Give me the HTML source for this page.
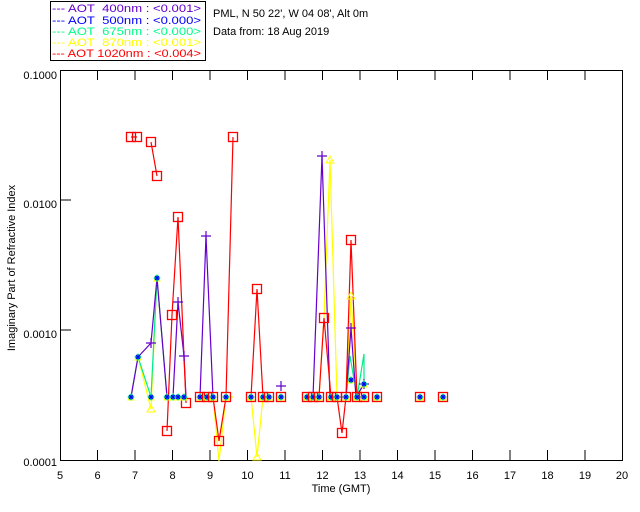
<!DOCTYPE html><html><head><style>body{margin:0;background:#fff}svg{display:block}text{font-family:"Liberation Sans",sans-serif;font-size:11px}</style></head><body>
<svg width="640" height="512" xmlns="http://www.w3.org/2000/svg">
<defs>
<g id="n"><path d="M-3 3L0-3 3 3Z" fill="none" stroke="#ff0"/><path d="M0-3L3 0 0 3-3 0Z" fill="none" stroke="#0f8"/><path d="M-2.5 0H2.5M0-2.5V2.5M-2-2L2 2M-2 2L2-2" fill="none" stroke="#00f" stroke-width="1"/></g>
<g id="b"><rect x="-4.5" y="-4.5" width="9" height="9" fill="none" stroke="#f00" stroke-width="1.3"/><use href="#n"/></g>
<rect id="r" x="-4.5" y="-4.5" width="9" height="9" fill="none" stroke="#f00" stroke-width="1.3"/>
<path id="p" d="M-5 0H5M0-5V5" fill="none" stroke="#60c" stroke-width="1.2"/>
<path id="t" d="M-4 3L0-4 4 3Z" fill="none" stroke="#ff0"/>
</defs>
<rect x="50.5" y="1.5" width="155" height="59" fill="none" stroke="#000"/>
<g font-size="11">
<text x="52" y="12" fill="#60c" textLength="149" lengthAdjust="spacingAndGlyphs">--- AOT&#160;&#160;400nm : &lt;0.001&gt;</text>
<text x="52" y="24" fill="#00f" textLength="149" lengthAdjust="spacingAndGlyphs">--- AOT&#160;&#160;500nm : &lt;0.000&gt;</text>
<text x="52" y="35" fill="#0f8" textLength="149" lengthAdjust="spacingAndGlyphs">--- AOT&#160;&#160;675nm : &lt;0.000&gt;</text>
<text x="52" y="46" fill="#ff0" textLength="149" lengthAdjust="spacingAndGlyphs">--- AOT&#160;&#160;870nm : &lt;0.001&gt;</text>
<text x="52" y="57" fill="#f00" textLength="149" lengthAdjust="spacingAndGlyphs">--- AOT 1020nm : &lt;0.004&gt;</text>
</g>
<text x="213" y="17">PML, N 50 22', W 04 08', Alt 0m</text>
<text x="213" y="35">Data from: 18 Aug 2019</text>
<rect x="60.5" y="70.5" width="562" height="390" fill="none" stroke="#000"/>
<g stroke="#000">
<path d="M97.5 70v10M135 70v10M172.5 70v10M210 70v10M247.5 70v10M285 70v10M322.5 70v10M360 70v10M397.5 70v10M435 70v10M472.5 70v10M510 70v10M547.5 70v10M585 70v10"/>
<path d="M97.5 460v-10M135 460v-10M172.5 460v-10M210 460v-10M247.5 460v-10M285 460v-10M322.5 460v-10M360 460v-10M397.5 460v-10M435 460v-10M472.5 460v-10M510 460v-10M547.5 460v-10M585 460v-10"/>
<path d="M60 200h11M60 330h11"/>
</g>
<g text-anchor="end"><text x="57" y="79">0.1000</text><text x="57" y="208">0.0100</text><text x="57" y="338">0.0010</text><text x="57" y="466">0.0001</text></g>
<g text-anchor="middle"><text x="60" y="479">5</text><text x="97.5" y="479">6</text><text x="135" y="479">7</text><text x="172.5" y="479">8</text><text x="210" y="479">9</text><text x="247.5" y="479">10</text><text x="285" y="479">11</text><text x="322.5" y="479">12</text><text x="360" y="479">13</text><text x="397.5" y="479">14</text><text x="435" y="479">15</text><text x="472.5" y="479">16</text><text x="510" y="479">17</text><text x="547.5" y="479">18</text><text x="585" y="479">19</text><text x="622" y="479">20</text>
<text x="341" y="492">Time (GMT)</text>
<text transform="translate(15 268) rotate(-90)" font-size="10">Imaginary Part of Refractive Index</text></g>
<g fill="none" stroke-width="1.2">
<polyline stroke="#ff0" points="131,397 138,357 151,409 157,278 167,397 173,397 178,397 184,397 186,397"/>
<polyline stroke="#ff0" points="200,397 207,397 213,397 219,461 226,397 233,397"/>
<polyline stroke="#ff0" points="251,397 257,457 263,397 269,397"/>
<polyline stroke="#ff0" points="319,397 324,318 330,160 337,397 346,397 351,296 357,397 364,384"/>
<polyline stroke="#0e8" points="131,397 138,357 151,397 157,278 167,397"/>
<polyline stroke="#0e8" points="346,397 350,356 357,397 364,354 364,384"/>
<polyline stroke="#60c" points="131,397 138,357 151,343 157,278 167,397 173,397 178,302 184,356 186,397"/>
<polyline stroke="#60c" points="200,397 206,236 213,397"/>
<polyline stroke="#60c" points="313,397 322,156 330,397 337,397 346,397 351,328 356,397 364,384"/>
<polyline stroke="#f00" points="131,137 137,137"/>
<polyline stroke="#f00" points="151,142 157,176"/>
<polyline stroke="#f00" points="167,431 172,315 178,217 186,403"/>
<polyline stroke="#f00" points="200,397 207,397 213,397 219,441 226,397 233,137"/>
<polyline stroke="#f00" points="251,397 257,289 263,397 269,397"/>
<polyline stroke="#f00" points="307,397 313,397 319,397 324,318 331,397 337,397 342,433 346,397 351,240 357,397 364,397"/>
</g>
<g>
<use href="#r" x="131" y="137"/><use href="#r" x="137" y="137"/><use href="#r" x="151" y="142"/><use href="#r" x="157" y="176"/>
<use href="#r" x="167" y="431"/><use href="#r" x="172" y="315"/><use href="#r" x="178" y="217"/><use href="#r" x="186" y="403"/>
<use href="#r" x="219" y="441"/><use href="#r" x="233" y="137"/><use href="#r" x="257" y="289"/><use href="#r" x="324" y="318"/><use href="#r" x="342" y="433"/><use href="#r" x="351" y="240"/>
<use href="#n" x="131" y="397"/><use href="#n" x="138" y="357"/><use href="#n" x="151" y="397"/><use href="#n" x="157" y="278"/><use href="#n" x="167" y="397"/><use href="#n" x="173" y="397"/><use href="#n" x="178" y="397"/><use href="#n" x="184" y="397"/>
<use href="#t" x="151" y="409"/><use href="#t" x="257" y="457"/><use href="#t" x="330" y="160"/><use href="#t" x="351" y="296"/>
<use href="#p" x="151" y="343"/><use href="#p" x="178" y="302"/><use href="#p" x="184" y="356"/><use href="#p" x="206" y="236"/><use href="#p" x="322" y="156"/><use href="#p" x="281" y="386"/><use href="#p" x="351" y="328"/><use href="#p" x="364" y="384"/>
<use href="#n" x="351" y="380"/><use href="#n" x="364" y="384"/>
<use href="#b" x="200" y="397"/><use href="#b" x="207" y="397"/><use href="#b" x="213" y="397"/><use href="#b" x="226" y="397"/><use href="#b" x="251" y="397"/><use href="#b" x="263" y="397"/><use href="#b" x="269" y="397"/><use href="#b" x="281" y="397"/><use href="#b" x="307" y="397"/><use href="#b" x="313" y="397"/><use href="#b" x="319" y="397"/><use href="#b" x="331" y="397"/><use href="#b" x="337" y="397"/><use href="#b" x="346" y="397"/><use href="#b" x="357" y="397"/><use href="#b" x="364" y="397"/><use href="#b" x="377" y="397"/><use href="#b" x="420" y="397"/><use href="#b" x="443" y="397"/>
</g>
</svg>
</body></html>
